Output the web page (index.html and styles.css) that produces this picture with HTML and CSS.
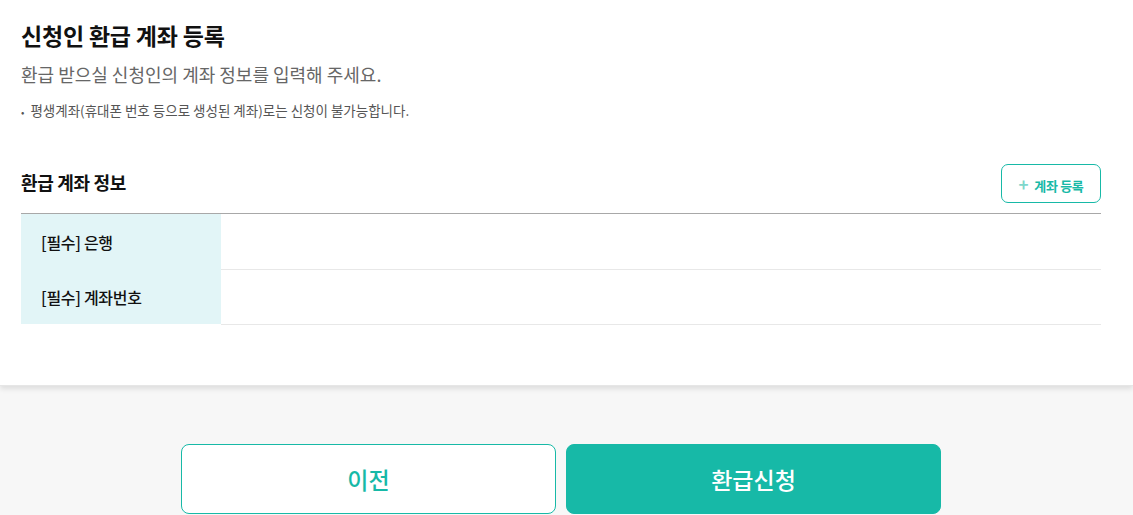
FILE: index.html
```html
<!DOCTYPE html>
<html>
	<head>
		<meta charset="utf-8">
		<title>환급 계좌 등록</title>
		<link rel="stylesheet" href="styles.css">
	</head>
	<body>
		<div class="card">
			<div class="inner">
				<h2 class="title">신청인 환급 계좌 등록</h2>
				<p class="sub">환급 받으실 신청인의 계좌 정보를 입력해 주세요.</p>
				<p class="note">평생계좌(휴대폰 번호 등으로 생성된 계좌)로는 신청이 불가능합니다.</p>
				<div class="head">
					<h3>환급 계좌 정보</h3>
					<button class="add"><span class="plus">+</span>계좌 등록</button>
				</div>
				<table class="info">
					<tr>
						<th>[필수] 은행</th>
						<td></td>
					</tr>
					<tr>
						<th>[필수] 계좌번호</th>
						<td></td>
					</tr>
				</table>
			</div>
		</div>
		<div class="bottom">
			<button class="btn prev">이전</button>
			<button class="btn apply">환급신청</button>
		</div>
	</body>
</html>
```

FILE: styles.css
```css
* {
	box-sizing: border-box;
}

body {
	margin: 0;
	background-color: #f7f7f7;
	font-family: "Noto Sans CJK KR", "Noto Sans", sans-serif;
	color: #111;
}

.card {
	background-color: #fff;
	box-shadow: 0 3px 5px rgba(0, 0, 0, 0.1);
	border-bottom: 1px solid #e6e6e6;
	padding-bottom: 60px;
}

.inner {
	width: 1080px;
	margin-left: 21px;
	padding-top: 17px;
}

.title {
	margin: 0;
	font-size: 23px;
	font-weight: 700;
	line-height: 36px;
	letter-spacing: -0.2px;
}

.sub {
	margin: 6px 0 0;
	font-size: 18px;
	line-height: 30px;
	color: #666;
}

.note {
	margin: 11px 0 0;
	font-size: 13.5px;
	line-height: 20px;
	color: #555;
}

.note:before {
	content: "•";
	margin-right: 6px;
	font-size: 10px;
}

.head {
	display: flex;
	justify-content: space-between;
	align-items: center;
	margin-top: 42px;
	padding-bottom: 10px;
	border-bottom: 1px solid #a8a8a8;
}

.head h3 {
	margin: 0 0 4px;
	font-size: 18px;
	font-weight: 700;
	letter-spacing: -0.3px;
}

.add {
	width: 100px;
	height: 39px;
	border: 1px solid #17b9a7;
	border-radius: 7px;
	background-color: #fff;
	color: #17b9a7;
	font-family: inherit;
	font-size: 13px;
	font-weight: 700;
	letter-spacing: -0.3px;
	padding: 0;
}

.plus {
	color: #7fd7cc;
	font-size: 17px;
	font-weight: 700;
	margin-right: 6px;
}

.info {
	width: 100%;
	border-collapse: collapse;
}

.info th {
	width: 200px;
	height: 55px;
	background-color: #e2f5f7;
	text-align: left;
	padding-left: 20px;
	font-size: 16px;
	font-weight: 500;
	letter-spacing: -0.3px;
}

.info td {
	border-bottom: 1px solid #e8e8e8;
}

.bottom {
	display: flex;
	justify-content: center;
	gap: 10px;
	padding-top: 58px;
	padding-right: 11px;
}

.btn {
	width: 375px;
	height: 70px;
	border-radius: 8px;
	font-family: inherit;
	font-size: 23px;
	font-weight: 500;
}

.prev {
	background-color: #fff;
	border: 1px solid #17b9a7;
	color: #17b9a7;
}

.apply {
	background-color: #17b9a7;
	border: 1px solid #17b9a7;
	color: #fff;
}
```
